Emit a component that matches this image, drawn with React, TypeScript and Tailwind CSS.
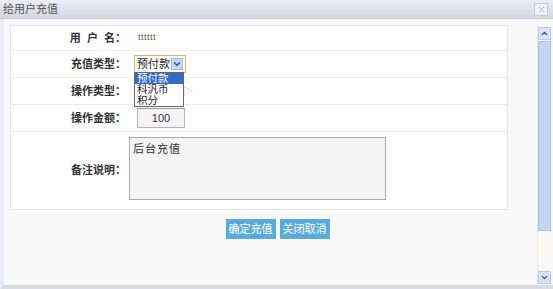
import { ChevronDown, ChevronUp, X } from "lucide-react";

const font = { fontFamily: '"Liberation Sans", "Noto Sans CJK SC", sans-serif' };

const Row = ({ label, h, children }: { label: string; h: string; children?: React.ReactNode }) => (
  <div className={`flex items-center border-b border-[#ececec] ${h}`}>
    <div className="w-[117px] shrink-0 text-right text-[11px] font-bold text-[#333] pr-[2px] whitespace-pre">{label}</div>
    <div className="flex-1 pl-[10px] flex items-center">{children}</div>
  </div>
);

const Opt = ({ text, active }: { text: string; active?: boolean }) => (
  <div className={`h-[11px] flex items-center px-[2px] text-[10.5px] overflow-hidden ${active ? "bg-[#3169c6] text-white" : "text-[#222]"}`}>
    {text}
  </div>
);

export default function App() {
  return (
    <div style={font} className="w-[553px] h-[289px] flex flex-col bg-[#f8f8fb] overflow-hidden">
      <div className="h-[19px] shrink-0 flex items-center justify-between px-[3px] bg-gradient-to-b from-[#eceef4] to-[#d3d7e1] border-b border-[#c5c9d4]">
        <span className="text-[11px] text-[#555]">给用户充值</span>
        <span className="w-[14px] h-[13px] border border-[#c8cbd3] bg-[#eef0f4] flex items-center justify-center mr-[2px]">
          <X className="w-[9px] h-[9px] text-[#9aa0ab]" strokeWidth={2} />
        </span>
      </div>
      <div className="flex-1 flex border-l-[4px] border-[#ebebf6] border-b-[4px] border-b-[#dcdde3]">
        <div className="flex-1 pl-[6px] pr-[29px] pt-[6px] bg-[#f9f9f9]">
          <div className="bg-white border border-[#e4e4e4] relative">
            <Row label="用  户  名：" h="h-[25px]">
              <span className="text-[9px] text-[#555] tracking-[0.5px]">tttttt</span>
            </Row>
            <Row label="充值类型：" h="h-[27px]">
              <div className="w-[52px] h-[18px] border border-[#e0b45c] bg-white flex items-center justify-between pl-[2px] pr-[2px] ml-[-4px] whitespace-nowrap">
                <span className="text-[11px] text-[#222] leading-none">预付款</span>
                <span className="w-[12px] h-[12px] shrink-0 bg-[#c6d6f5] border border-[#a9bce4] flex items-center justify-center">
                  <ChevronDown className="w-[10px] h-[10px] text-[#2d4e9a]" strokeWidth={3.5} />
                </span>
              </div>
            </Row>
            <Row label="操作类型：" h="h-[27px]">
              <span className="text-[10px] text-[#bbb] ml-[45px]">▷</span>
            </Row>
            <Row label="操作金额：" h="h-[27px]">
              <div className="w-[48px] h-[20px] border border-[#b5b5b5] border-t-[#999] bg-[#f4f4f4] flex items-center justify-center text-[11px] text-[#333] ml-[-1px]">100</div>
            </Row>
            <div className="flex items-center h-[77px]">
              <div className="w-[117px] shrink-0 text-right text-[11px] font-bold text-[#333] pr-[2px]">备注说明：</div>
              <div className="pl-[1px] mb-[5px]">
                <div className="w-[257px] h-[63px] border border-[#a9a9a9] bg-[#f4f4f4] text-[11px] text-[#333] px-[3px] pt-[3px] tracking-[1px]">后台充值</div>
              </div>
            </div>
            <div className="absolute left-[123px] top-[46px] w-[50px] border border-[#666] bg-white whitespace-nowrap">
              <Opt text="预付款" active />
              <Opt text="科汎币" />
              <Opt text="积分" />
            </div>
          </div>
          <div className="flex justify-center gap-[4px] mt-[9px] pl-[37px]">
            <button className="w-[50px] h-[20px] bg-[#5aabdc] text-white text-[11px]">确定充值</button>
            <button className="w-[50px] h-[20px] bg-[#5aabdc] text-white text-[11px]">关闭取消</button>
          </div>
        </div>
        <div className="w-[14px] shrink-0 flex flex-col bg-[#fbfaf2] border-l border-[#e8e8ee] pt-[8px] pb-[1px] mr-[2px]">
          <div className="h-[13px] bg-[#d9e4fa] border border-[#b7c8ec] flex items-center justify-center">
            <ChevronUp className="w-[9px] h-[9px] text-[#2d4e9a]" strokeWidth={3.5} />
          </div>
          <div className="h-[190px] bg-[#c3d5f7] border border-[#a9bfeb] mt-[1px]" />
          <div className="flex-1" />
          <div className="h-[13px] bg-[#d9e4fa] border border-[#b7c8ec] flex items-center justify-center">
            <ChevronDown className="w-[9px] h-[9px] text-[#2d4e9a]" strokeWidth={3.5} />
          </div>
        </div>
      </div>
    </div>
  );
}
